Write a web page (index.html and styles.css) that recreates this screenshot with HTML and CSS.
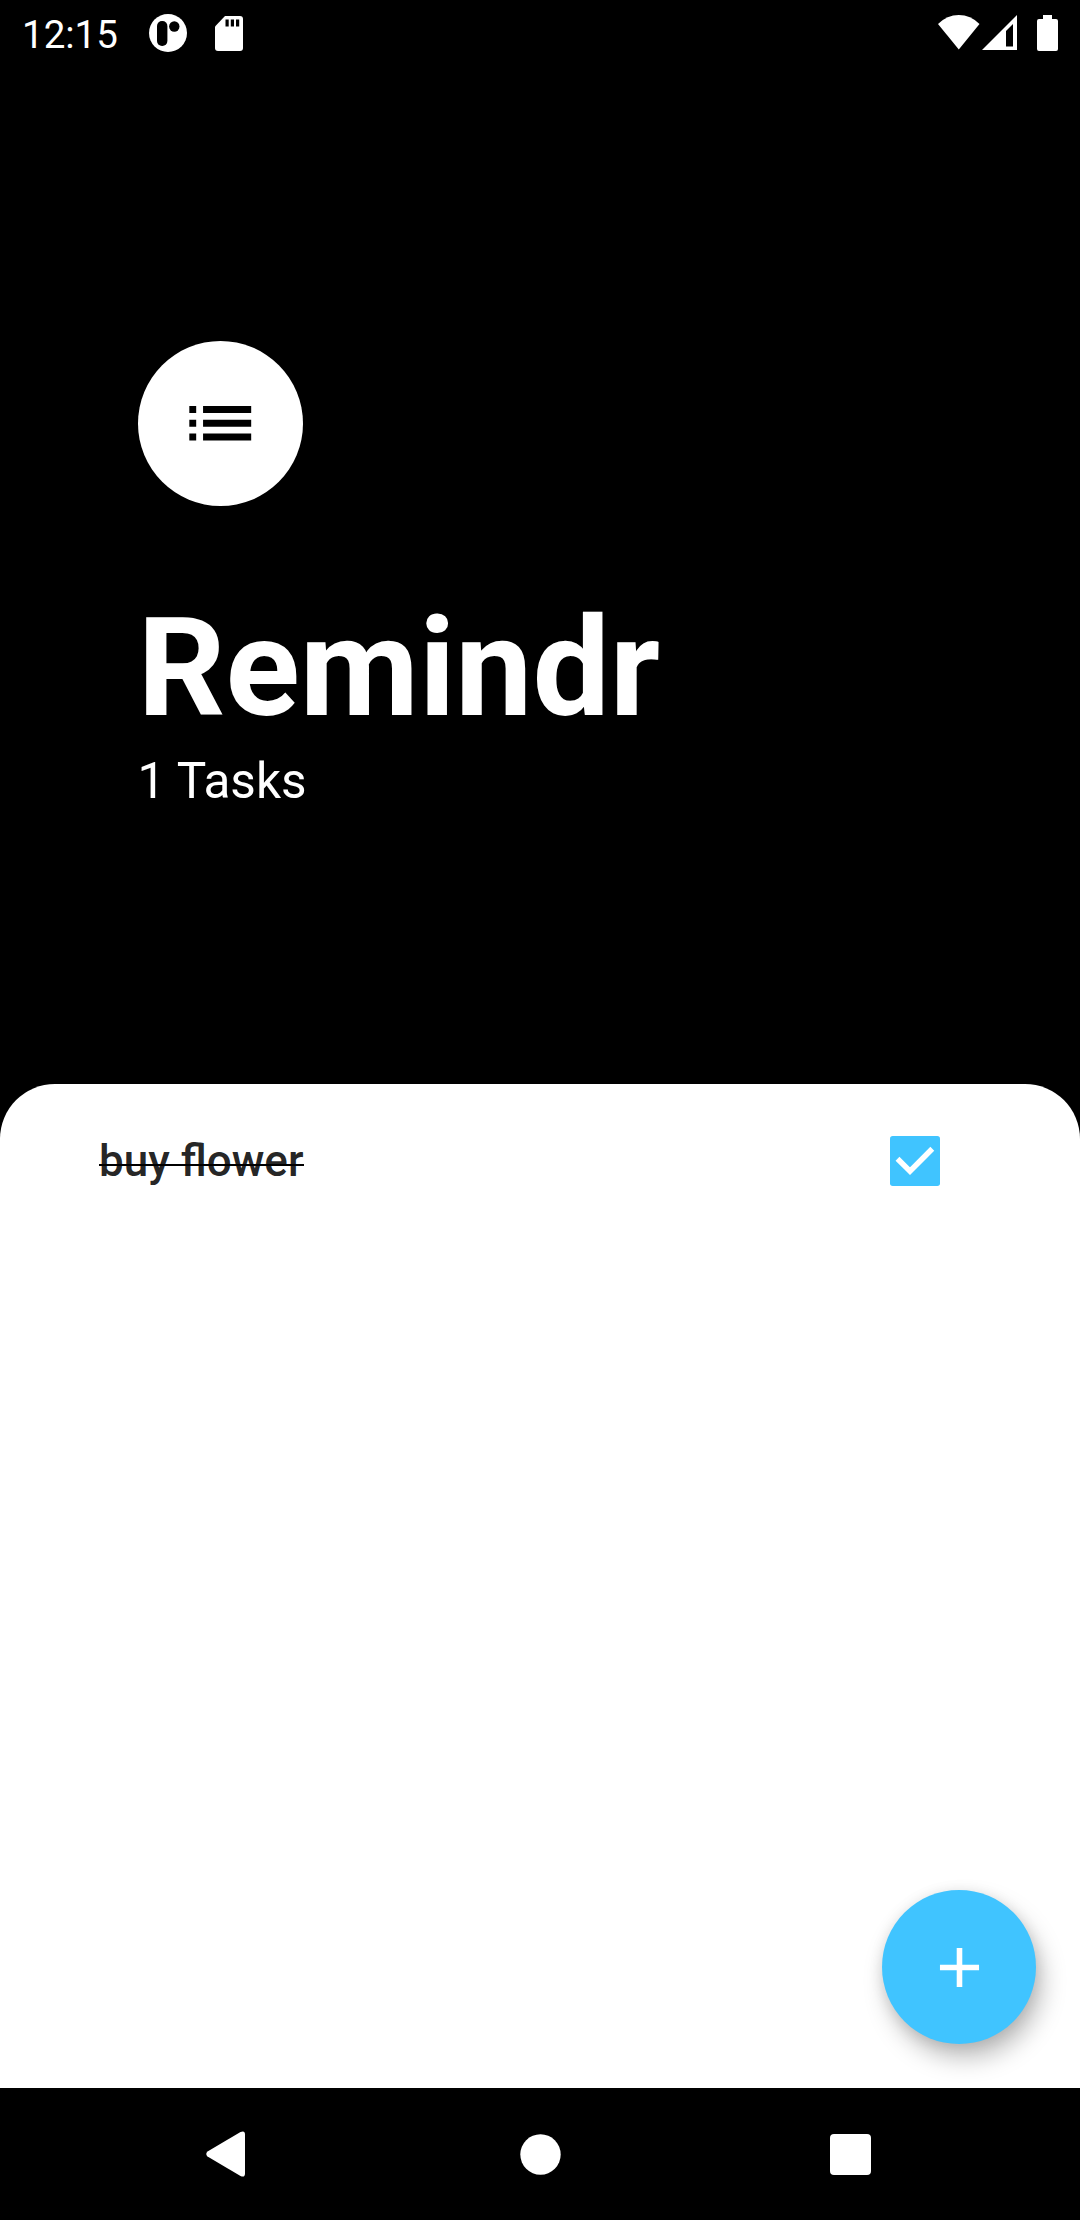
FILE: index.html
```html
<!DOCTYPE html>
<html lang="en">
<head>
<meta charset="utf-8">
<title>Remindr</title>
<link rel="stylesheet" href="styles.css">
</head>
<body>
<div class="screen">
  <div class="status-bar">
    <span class="clock">12:15</span>
    <svg class="app-icon" width="38" height="38" viewBox="0 0 38 38"><circle cx="19" cy="19" r="19" fill="#fff"/><rect x="8" y="7" width="10.4" height="25" rx="5"/><circle cx="25.3" cy="12.5" r="5.2"/></svg>
    <svg class="sd-icon" width="28" height="35" viewBox="0 0 28 35"><path d="M10 0H25Q28 0 28 3V32Q28 35 25 35H3Q0 35 0 32V10.500Z" fill="#fff"/><path d="M10.500 3.500h3.200v7h-3.200zM15.800 3.500h3.200v7h-3.200zM21 3.500h3.200v7H21z"/></svg>
    <div class="system-icons">
      <svg width="42" height="35" viewBox="0 0 42 35"><path d="M0 9Q9 0 20.800 0T41.500 9L20.800 34.500Z" fill="#fff"/></svg>
      <svg class="signal-icon" width="35" height="35" viewBox="0 0 35 35"><path d="M35 0V35H0Z" fill="#fff"/><path d="M24 16L31 9V31.500H24Z"/></svg>
      <svg class="battery-icon" width="21" height="36" viewBox="0 0 21 36"><path d="M6 0H15V4H19Q21 4 21 6V34Q21 36 19 36H2Q0 36 0 34V6Q0 4 2 4H6Z" fill="#fff"/></svg>
    </div>
  </div>
  <header class="header">
    <div class="avatar">
      <svg width="82.500" height="82.500" viewBox="0 0 24 24"><path d="M3 13h2v-2H3v2zm0 4h2v-2H3v2zm0-8h2V7H3v2zm4 4h14v-2H7v2zm0 4h14v-2H7v2zM7 7v2h14V7H7z"/></svg>
    </div>
    <h1 class="title">Remindr</h1>
    <p class="count">1 Tasks</p>
  </header>
  <main class="sheet">
    <div class="task">
      <span class="task-name">buy flower</span>
      <svg class="checkbox" width="50" height="50" viewBox="0 0 50 50"><rect width="50" height="50" rx="2.750" fill="#40c4ff"/><path d="M7.500 22.800L20 35.200L42.300 12.800" fill="none" stroke="#fff" stroke-width="5.500"/></svg>
    </div>
    <button class="fab" aria-label="Add task">
      <svg width="67" height="67" viewBox="0 0 24 24"><path d="M19 13h-6v6h-2v-6H5v-2h6V5h2v6h6v2z" fill="#fff"/></svg>
    </button>
  </main>
  <nav class="nav-bar">
    <svg width="40" height="46" viewBox="0 0 40 46"><path d="M1.500 20.500L34.500 1Q39 -1 39 3.500V42.500Q39 47 34.500 45L1.500 25.500Q-1 23 1.500 20.500Z" fill="#fff"/></svg>
    <svg class="home-icon" width="41" height="41" viewBox="0 0 41 41"><circle cx="20.500" cy="20.500" r="20.200" fill="#fff"/></svg>
    <svg width="41" height="41" viewBox="0 0 41 41"><rect width="41" height="41" rx="4" fill="#fff"/></svg>
  </nav>
</div>
</body>
</html>
```
FILE: styles.css
```css
body {
  margin: 0;
  background: #000;
  font-family: Roboto, "Liberation Sans", sans-serif;
}

svg {
  display: block;
  flex: none;
}

.screen {
  display: flex;
  flex-direction: column;
  width: 1080px;
  height: 2220px;
  overflow: hidden;
  background: #000;
  color: #fff;
}

.status-bar {
  display: flex;
  align-items: center;
  box-sizing: border-box;
  height: 66px;
  padding: 0 22px 0 22px;
}

.clock {
  width: 127px;
  font-size: 38.5px;
  line-height: 66px;
  padding-top: 3px;
}

.sd-icon {
  margin-left: 28px;
}

.system-icons {
  display: flex;
  margin-left: auto;
}

.signal-icon {
  margin-left: 2px;
}

.battery-icon {
  margin-left: 20px;
}

.header {
  box-sizing: border-box;
  height: 1017.5px;
  padding: 275px 137.5px 0;
}

.avatar {
  display: flex;
  align-items: center;
  justify-content: center;
  width: 165px;
  height: 165px;
  border-radius: 50%;
  background: #fff;
}

.title {
  margin: 82px 0 0;
  font-size: 137.5px;
  font-weight: 700;
  line-height: 161px;
}

.count {
  margin: 3px 0 0;
  font-size: 49.5px;
  line-height: 58px;
}

.sheet {
  display: flex;
  flex: 1;
  flex-direction: column;
  justify-content: space-between;
  box-sizing: border-box;
  padding: 0 44px 44px 99px;
  border-radius: 55px 55px 0 0;
  background: #fff;
}

.task {
  display: flex;
  align-items: center;
  justify-content: space-between;
  height: 154px;
  padding-right: 96px;
}

/* The rule sits a little below the middle of the lowercase letters. */
.task-name {
  background: linear-gradient(#000, #000) 0 29px / 100% 2px no-repeat;
  color: rgba(0, 0, 0, 0.87);
  font-size: 44px;
  font-weight: 500;
  line-height: 52px;
}

.fab {
  display: flex;
  align-items: center;
  align-self: flex-end;
  justify-content: center;
  width: 154px;
  height: 154px;
  padding: 0;
  border: 0;
  border-radius: 50%;
  background: #40c4ff;
  box-shadow: 6px 14px 24px rgba(0, 0, 0, 0.26), 0 2px 14px rgba(0, 0, 0, 0.1);
}

.nav-bar {
  display: flex;
  align-items: center;
  justify-content: space-between;
  box-sizing: border-box;
  height: 132px;
  padding: 0 209px 0 206px;
}

.home-icon {
  margin-left: 4px;
}
```
